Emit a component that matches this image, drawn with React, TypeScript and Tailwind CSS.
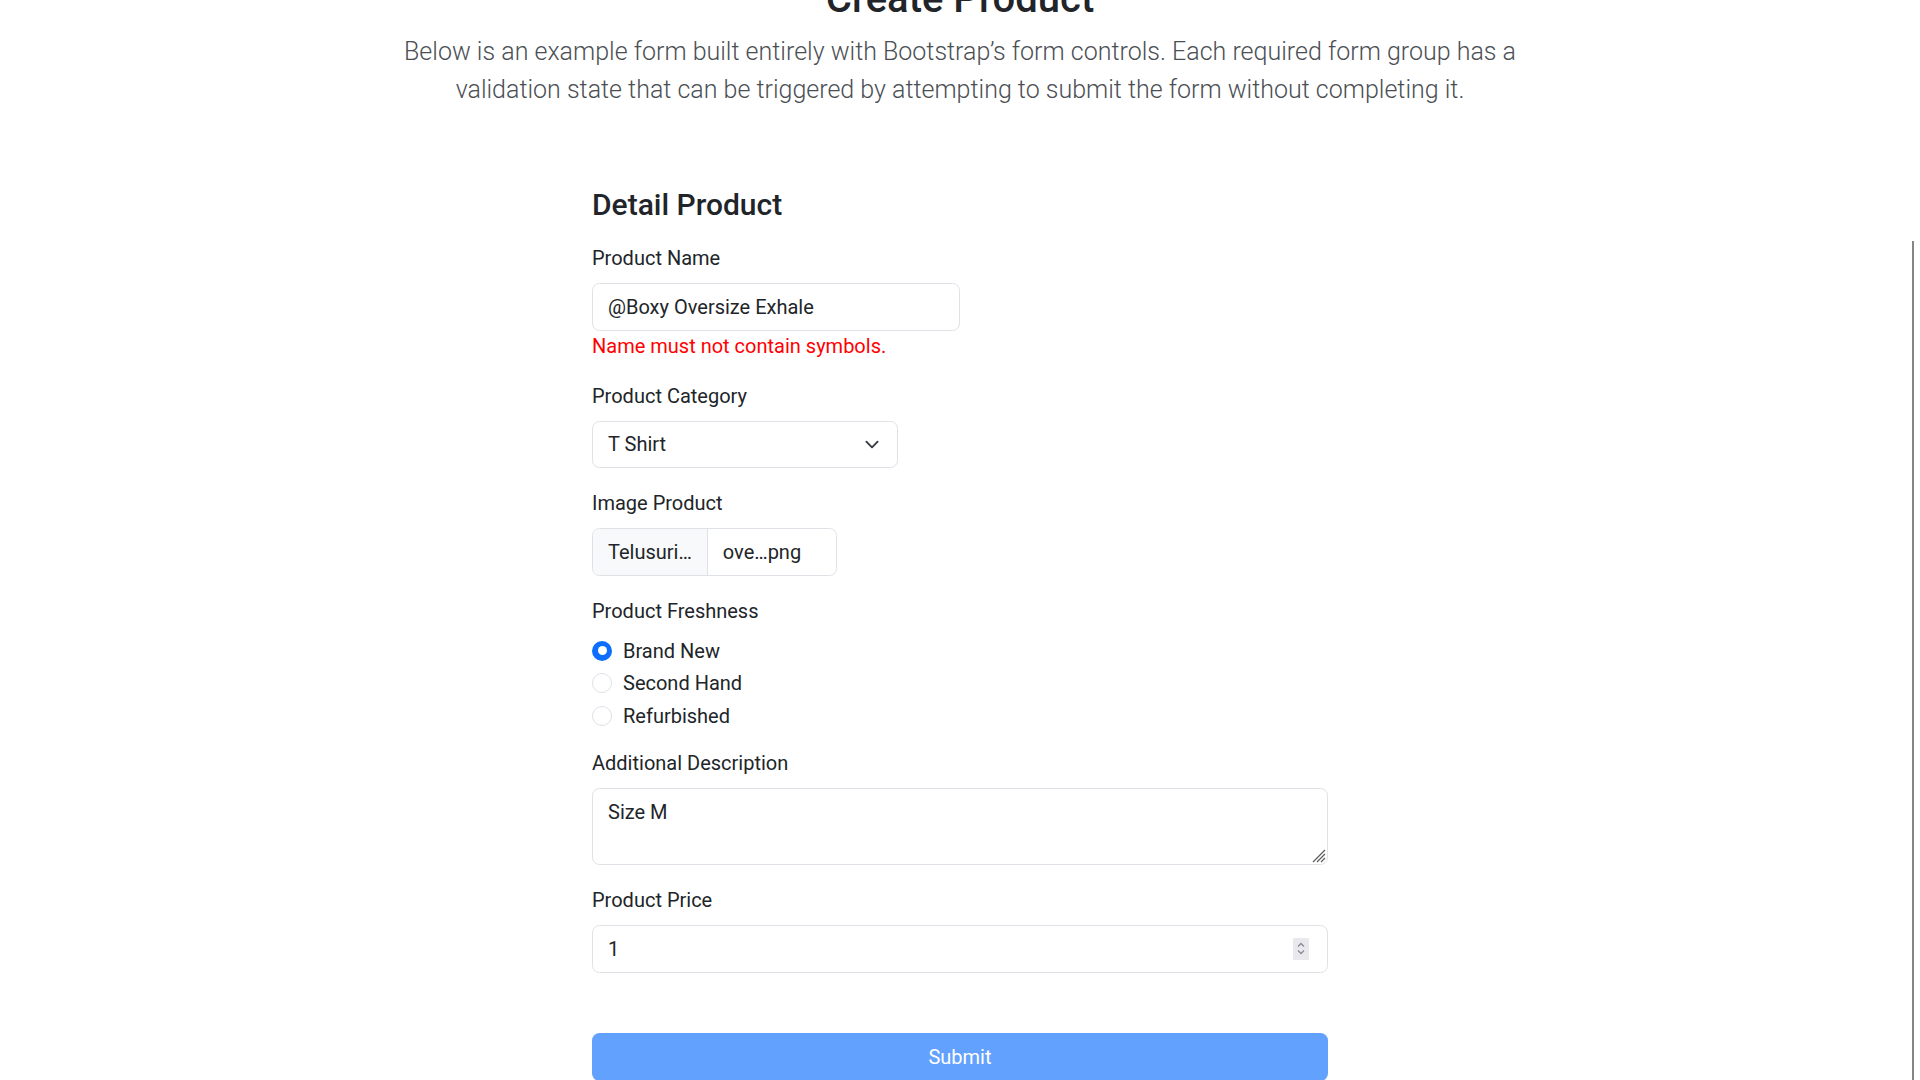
import { useState } from "react";

const labelCls = "block mb-[10px] text-[20px] leading-[30px] text-[#212529]";
const controlCls =
  "block h-[47.5px] rounded-[7.5px] border border-[#dee2e6] bg-white px-[15px] text-[20px] leading-[30px] text-[#212529] outline-none";

function Radio({ label, checked, onSelect }: { label: string; checked: boolean; onSelect: () => void }) {
  return (
    <label className="mb-[2.5px] flex h-[30px] cursor-pointer items-center gap-[11px]" onClick={onSelect}>
      {checked ? (
        <span className="flex h-[20px] w-[20px] items-center justify-center rounded-full bg-[#0d6efd]">
          <span className="h-[9px] w-[9px] rounded-full bg-white" />
        </span>
      ) : (
        <span className="h-[20px] w-[20px] rounded-full border border-[#dee2e6] bg-white" />
      )}
      <span className="text-[20px] leading-[30px] text-[#212529]">{label}</span>
    </label>
  );
}

export default function App() {
  const [freshness, setFreshness] = useState("Brand New");

  return (
    <div className="relative min-h-screen overflow-hidden bg-white font-['Roboto',sans-serif]">
      {/* overlay scrollbar thumb */}
      <div className="absolute right-[6px] top-[241px] bottom-0 w-[2px] bg-[#858585]" />

      <div className="-mt-[25px] text-center">
        <h2 className="mb-[10px] text-[40px] font-medium leading-[48px] text-[#212529]">Create Product</h2>
        <p className="mx-auto max-w-[1140px] text-[25px] font-light leading-[37.5px] text-[#4b4f54]">
          Below is an example form built entirely with Bootstrap’s form controls. Each required form group has a
          <br />
          validation state that can be triggered by attempting to submit the form without completing it.
        </p>
      </div>

      <form className="mx-auto mt-[79px] w-[736px]" onSubmit={(e) => e.preventDefault()}>
        <h4 className="mb-[20px] text-[30px] font-medium leading-[36px] text-[#212529]">Detail Product</h4>

        <div className="mb-[20px]">
          <label className={labelCls}>Product Name</label>
          <input className={`${controlCls} w-[368px]`} defaultValue="@Boxy Oversize Exhale" />
          <div className="text-[20px] leading-[30px] text-[#ff0000]">Name must not contain symbols.</div>
        </div>

        <div className="mb-[20px]">
          <label className={labelCls}>Product Category</label>
          <div className={`${controlCls} flex w-[306px] items-center justify-between`}>
            <span>T Shirt</span>
            <svg width="20" height="15" viewBox="0 0 16 16" fill="none" stroke="#343a40" strokeWidth="2" strokeLinecap="round" strokeLinejoin="round">
              <path d="m2 5 6 6 6-6" />
            </svg>
          </div>
        </div>

        <div className="mb-[20px]">
          <label className={labelCls}>Image Product</label>
          <div className="flex h-[47.5px] w-[245px] overflow-hidden rounded-[7.5px] border border-[#dee2e6] text-[20px] leading-[30px] text-[#212529]">
            <span className="flex items-center border-r border-[#dee2e6] bg-[#f8f9fa] px-[15px]">Telusuri…</span>
            <span className="flex items-center px-[15px]">ove…png</span>
          </div>
        </div>

        <div className="mb-[17.5px]">
          <label className={labelCls}>Product Freshness</label>
          {["Brand New", "Second Hand", "Refurbished"].map((f) => (
            <Radio key={f} label={f} checked={freshness === f} onSelect={() => setFreshness(f)} />
          ))}
        </div>

        <div className="mb-[20px]">
          <label className={labelCls}>Additional Description</label>
          <div className="relative h-[77px] w-full rounded-[7.5px] border border-[#dee2e6] px-[15px] py-[7.5px] text-[20px] leading-[30px] text-[#212529]">
            Size M
            <svg className="absolute bottom-[1px] right-[1px]" width="14" height="14" viewBox="0 0 14 14" stroke="#5c5c5c" strokeWidth="1.2">
              <path d="M13 1 1 13M13 5 5 13M13 9 9 13" />
            </svg>
          </div>
        </div>

        <div className="mb-[60px]">
          <label className={labelCls}>Product Price</label>
          <div className={`${controlCls} flex w-full items-center justify-between pr-[18px]`}>
            <span>1</span>
            <span className="flex h-[22px] w-[16px] flex-col items-center justify-center gap-[3px] bg-[#e9e9ed]">
              <svg width="8" height="5" viewBox="0 0 8 5" fill="none" stroke="#8a8a98" strokeWidth="1.3">
                <path d="M1 4.5 4 1.5l3 3" />
              </svg>
              <svg width="8" height="5" viewBox="0 0 8 5" fill="none" stroke="#8a8a98" strokeWidth="1.3">
                <path d="M1 .5 4 3.5l3-3" />
              </svg>
            </span>
          </div>
        </div>

        <button
          type="submit"
          className="h-[48px] w-full rounded-[7.5px] bg-[#62a1fe] text-[20px] leading-[30px] text-white"
        >
          Submit
        </button>
      </form>
    </div>
  );
}
